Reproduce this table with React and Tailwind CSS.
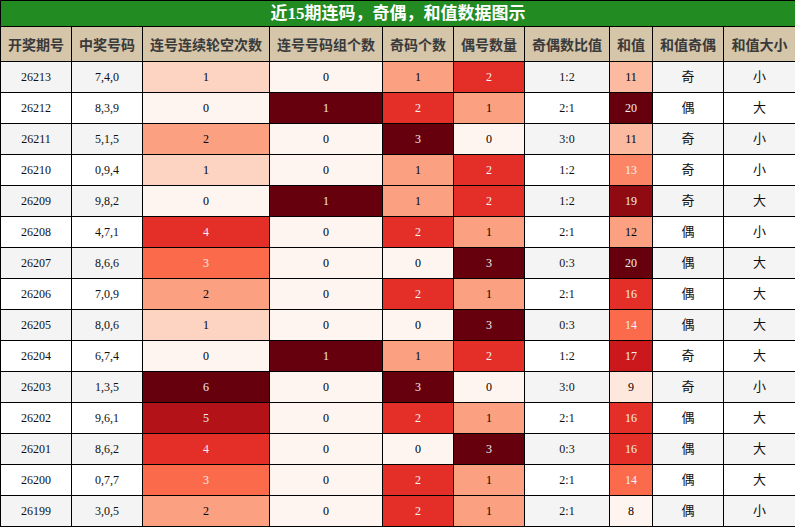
import React from "react";

const REDS = [
  [255, 245, 240],
  [254, 224, 210],
  [252, 187, 161],
  [252, 146, 114],
  [251, 106, 74],
  [239, 59, 44],
  [203, 24, 29],
  [165, 15, 21],
  [103, 0, 13],
];

function reds(t) {
  const x = Math.max(0, Math.min(1, t)) * 8;
  const i = Math.min(7, Math.floor(x));
  const f = x - i;
  const a = REDS[i];
  const b = REDS[i + 1];
  return a.map((v, k) => Math.round(v + (b[k] - v) * f));
}

function lum([r, g, b]) {
  const c = (v) => {
    const s = v / 255;
    return s <= 0.03928 ? s / 12.92 : Math.pow((s + 0.055) / 1.055, 2.4);
  };
  return 0.2126 * c(r) + 0.7152 * c(g) + 0.0722 * c(b);
}

function cellStyle(v, min, max) {
  const rgb = reds((v - min) / (max - min));
  return {
    backgroundColor: `rgb(${rgb[0]},${rgb[1]},${rgb[2]})`,
    color: lum(rgb) < 0.408 ? "#f1f1f1" : "#000000",
  };
}

const rows = [
  [26213, "7,4,0", 1, 0, 1, 2, "1:2", 11, "奇", "小"],
  [26212, "8,3,9", 0, 1, 2, 1, "2:1", 20, "偶", "大"],
  [26211, "5,1,5", 2, 0, 3, 0, "3:0", 11, "奇", "小"],
  [26210, "0,9,4", 1, 0, 1, 2, "1:2", 13, "奇", "小"],
  [26209, "9,8,2", 0, 1, 1, 2, "1:2", 19, "奇", "大"],
  [26208, "4,7,1", 4, 0, 2, 1, "2:1", 12, "偶", "小"],
  [26207, "8,6,6", 3, 0, 0, 3, "0:3", 20, "偶", "大"],
  [26206, "7,0,9", 2, 0, 2, 1, "2:1", 16, "偶", "大"],
  [26205, "8,0,6", 1, 0, 0, 3, "0:3", 14, "偶", "大"],
  [26204, "6,7,4", 0, 1, 1, 2, "1:2", 17, "奇", "大"],
  [26203, "1,3,5", 6, 0, 3, 0, "3:0", 9, "奇", "小"],
  [26202, "9,6,1", 5, 0, 2, 1, "2:1", 16, "偶", "大"],
  [26201, "8,6,2", 4, 0, 0, 3, "0:3", 16, "偶", "大"],
  [26200, "0,7,7", 3, 0, 2, 1, "2:1", 14, "偶", "大"],
  [26199, "3,0,5", 2, 0, 2, 1, "2:1", 8, "偶", "小"],
];

const headers = [
  "开奖期号",
  "中奖号码",
  "连号连续轮空次数",
  "连号号码组个数",
  "奇码个数",
  "偶号数量",
  "奇偶数比值",
  "和值",
  "和值奇偶",
  "和值大小",
];

const widths = [
  "w-[71px]",
  "w-[71px]",
  "w-[127px]",
  "w-[113px]",
  "w-[71px]",
  "w-[71px]",
  "w-[85px]",
  "w-[43px]",
  "w-[71px]",
  "w-[72px]",
];

const ranges = { 2: [0, 6], 3: [0, 1], 4: [0, 3], 5: [0, 3], 7: [8, 20] };

export default function App() {
  return (
    <div className="w-[795px] h-[528px] bg-white overflow-hidden">
      <table className="table-fixed border-collapse w-[795px] font-['Liberation_Serif','Noto_Sans_CJK_SC',serif]">
        <colgroup>
          {widths.map((w, i) => (
            <col key={i} className={w} />
          ))}
        </colgroup>
        <tbody>
          <tr className="h-[26px]">
            <td
              colSpan={10}
              className="border border-black bg-[#228b22] text-white text-center font-bold text-[17px] leading-none p-0"
            >
              近15期连码，奇偶，和值数据图示
            </td>
          </tr>
          <tr className="h-[35px]">
            {headers.map((h) => (
              <td
                key={h}
                className="border border-black bg-[#d5c5a9] text-[#3a3a3a] text-center font-bold text-[14px] p-0 font-['Noto_Sans_CJK_SC',sans-serif] whitespace-nowrap"
              >
                {h}
              </td>
            ))}
          </tr>
          {rows.map((r, ri) => {
            const plain = ri % 2 === 0 ? "bg-[#f4f4f4]" : "bg-white";
            return (
              <tr key={r[0]} className="h-[31px]">
                {r.map((v, ci) => {
                  const rng = ranges[ci];
                  const isCjk = ci >= 8;
                  return (
                    <td
                      key={ci}
                      style={rng ? cellStyle(v, rng[0], rng[1]) : undefined}
                      className={`border border-black text-center p-0 ${
                        rng ? "" : plain + " text-[#111111]"
                      } ${isCjk ? "text-[13px]" : "text-[12px]"}`}
                    >
                      {v}
                    </td>
                  );
                })}
              </tr>
            );
          })}
        </tbody>
      </table>
    </div>
  );
}
